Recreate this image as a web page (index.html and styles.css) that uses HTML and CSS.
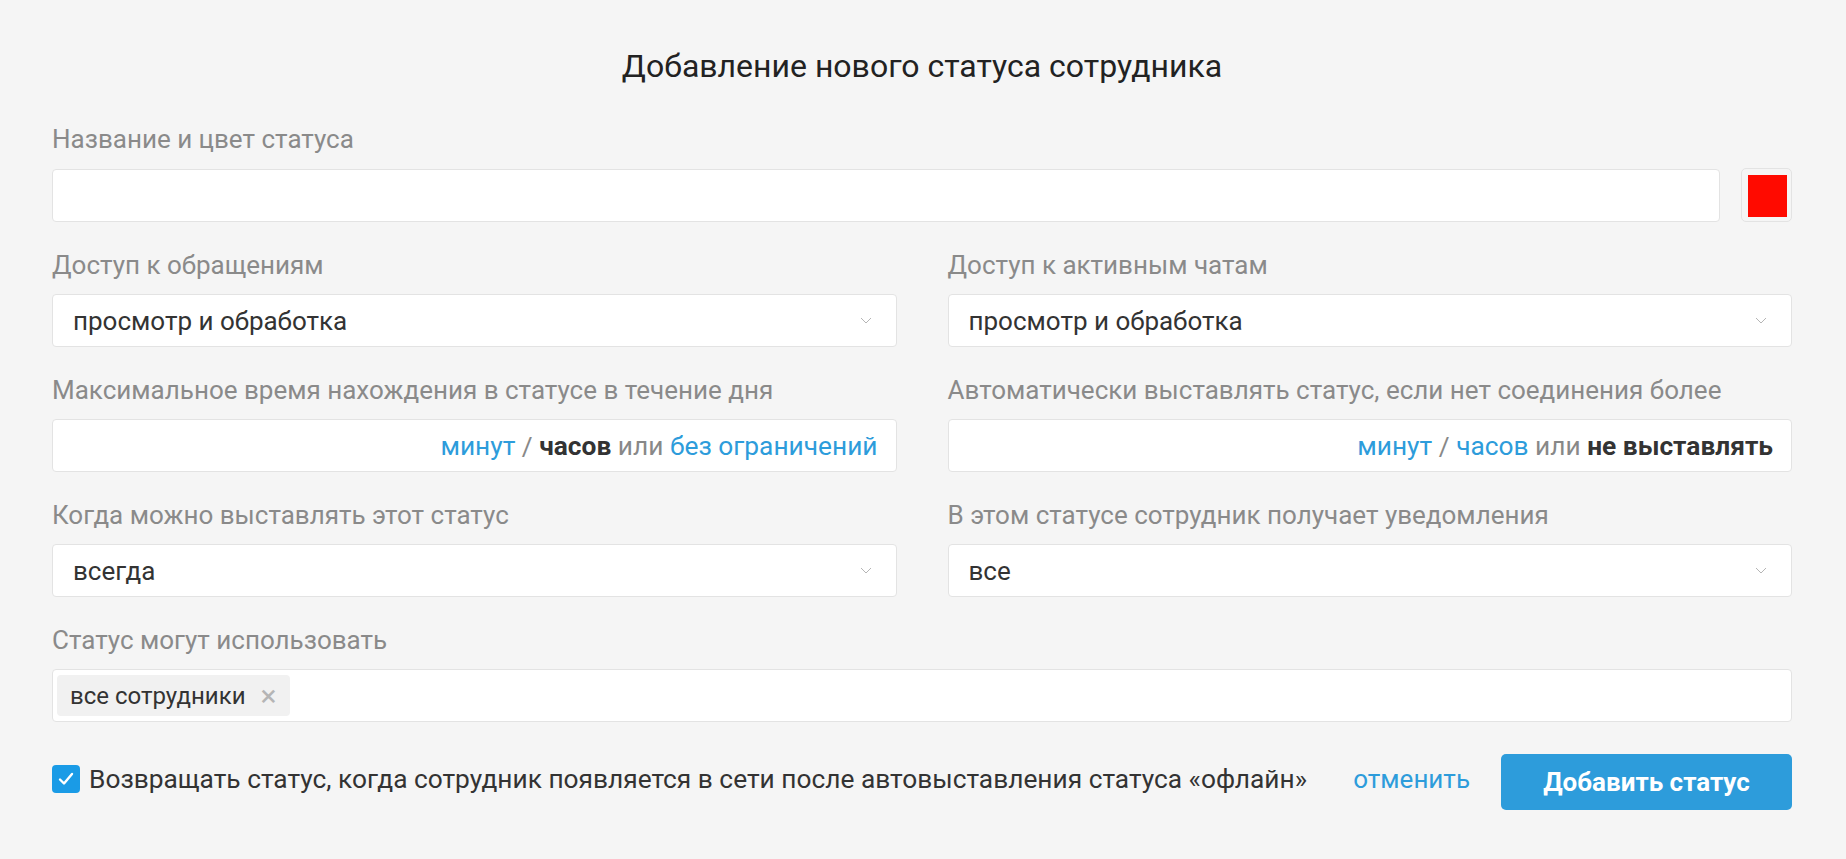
FILE: index.html
```html
<!DOCTYPE html>
<html lang="ru">
<head>
<meta charset="utf-8">
<title>Добавление нового статуса сотрудника</title>
<link rel="stylesheet" href="styles.css">
</head>
<body>
<div class="page">
  <h1 class="title">Добавление нового статуса сотрудника</h1>

  <div class="field">
    <div class="label">Название и цвет статуса</div>
    <div class="name-row">
      <div class="input"></div>
      <div class="swatch"><div class="swatch-color"></div></div>
    </div>
  </div>

  <div class="grid">
    <div class="field">
      <div class="label">Доступ к обращениям</div>
      <div class="input select"><span>просмотр и обработка</span><svg class="chev" width="12" height="7" viewBox="0 0 12 7"><path d="M1 1l5 5 5-5" fill="none" stroke="#b5b5b5" stroke-width="1"/></svg></div>
    </div>
    <div class="field">
      <div class="label">Доступ к активным чатам</div>
      <div class="input select"><span>просмотр и обработка</span><svg class="chev" width="12" height="7" viewBox="0 0 12 7"><path d="M1 1l5 5 5-5" fill="none" stroke="#b5b5b5" stroke-width="1"/></svg></div>
    </div>

    <div class="field">
      <div class="label">Максимальное время нахождения в статусе в течение дня</div>
      <div class="input units"><span><span class="link">минут</span> <span class="muted">/</span> <b>часов</b> <span class="muted">или</span> <span class="link">без ограничений</span></span></div>
    </div>
    <div class="field">
      <div class="label">Автоматически выставлять статус, если нет соединения более</div>
      <div class="input units"><span><span class="link">минут</span> <span class="muted">/</span> <span class="link">часов</span> <span class="muted">или</span> <b>не выставлять</b></span></div>
    </div>

    <div class="field">
      <div class="label">Когда можно выставлять этот статус</div>
      <div class="input select"><span>всегда</span><svg class="chev" width="12" height="7" viewBox="0 0 12 7"><path d="M1 1l5 5 5-5" fill="none" stroke="#b5b5b5" stroke-width="1"/></svg></div>
    </div>
    <div class="field">
      <div class="label">В этом статусе сотрудник получает уведомления</div>
      <div class="input select"><span>все</span><svg class="chev" width="12" height="7" viewBox="0 0 12 7"><path d="M1 1l5 5 5-5" fill="none" stroke="#b5b5b5" stroke-width="1"/></svg></div>
    </div>
  </div>

  <div class="field">
    <div class="label">Статус могут использовать</div>
    <div class="input tags"><span class="chip">все сотрудники<span class="chip-x">×</span></span></div>
  </div>

  <div class="footer">
    <label class="check">
      <span class="box"><svg width="16" height="14" viewBox="0 0 16 14"><path d="M2 7.5l4 4L14 2" fill="none" stroke="#fff" stroke-width="2.4" stroke-linecap="round" stroke-linejoin="round"/></svg></span>
      <span class="check-text">Возвращать статус, когда сотрудник появляется в сети после автовыставления статуса «офлайн»</span>
    </label>
    <span class="cancel">отменить</span>
    <button class="btn">Добавить статус</button>
  </div>
</div>
</body>
</html>
```

FILE: styles.css
```css
* { box-sizing: border-box; }
html, body { margin: 0; padding: 0; }
body {
  background: #f5f5f5;
  font-family: Roboto, "Noto Sans", Arial, sans-serif;
  color: #333;
  width: 1846px;
  height: 859px;
  overflow: hidden;
}
.page {
  padding: 44px 54px 0 52px;
}
.title {
  margin: 0 0 37px;
  text-align: center;
  font-weight: 400;
  font-size: 32px;
  line-height: 44px;
  color: #222;
}
.label {
  font-size: 26px;
  line-height: 28px;
  color: #8a8a8a;
  margin-bottom: 15px;
  white-space: nowrap;
}
.field { margin-bottom: 29px; }
.grid {
  display: grid;
  grid-template-columns: 1fr 1fr;
  column-gap: 51px;
}
.name-row {
  display: flex;
  gap: 21px;
  align-items: center;
}
.name-row .input { flex: 1; }
.input {
  height: 53px;
  background: #fff;
  border: 1px solid #e3e3e3;
  border-radius: 4px;
  display: flex;
  align-items: center;
  font-size: 26px;
  color: #333;
  padding: 0 20px;
}
.select { justify-content: space-between; padding-right: 24px; }
.chev { display: block; }
.units { justify-content: flex-end; padding-right: 18px; white-space: nowrap; font-size: 26.3px; }
.units b { font-weight: 700; color: #333; }
.link { color: #2d9cdb; }
.muted { color: #888; }
.swatch {
  width: 51px;
  height: 54px;
  border: 1px solid #e3e3e3;
  border-radius: 5px;
  padding: 6px 4px 4px 6px;
  background: #f5f5f5;
}
.swatch-color {
  width: 100%;
  height: 100%;
  background: #ff0a00;
}
.tags { padding: 0 4px; }
.chip {
  display: inline-flex;
  align-items: center;
  height: 41px;
  background: #f1f1f1;
  border-radius: 4px;
  padding: 0 13px 0 13px;
  font-size: 24px;
  color: #333;
}
.chip-x {
  color: #b5b5b5;
  font-size: 30px;
  margin-left: 15px;
  line-height: 1;
}
.footer {
  display: flex;
  align-items: center;
  margin-top: 32px;
}
.check {
  display: flex;
  align-items: center;
  gap: 9px;
  font-size: 26.3px;
  color: #333;
  margin-top: -6px;
  white-space: nowrap;
}
.box {
  width: 28px;
  height: 28px;
  border-radius: 4px;
  background: #1a9be6;
  display: flex;
  align-items: center;
  justify-content: center;
  flex: none;
}
.box svg { display: block; }
.cancel {
  margin-left: auto;
  color: #2d9cdb;
  font-size: 26px;
  margin-right: 31px;
  margin-top: -6px;
}
.btn {
  width: 291px;
  height: 56px;
  background: #2d9cdb;
  color: #fff;
  border: 0;
  border-radius: 5px;
  font-family: inherit;
  font-weight: 700;
  font-size: 26px;
  padding: 0;
}
```
